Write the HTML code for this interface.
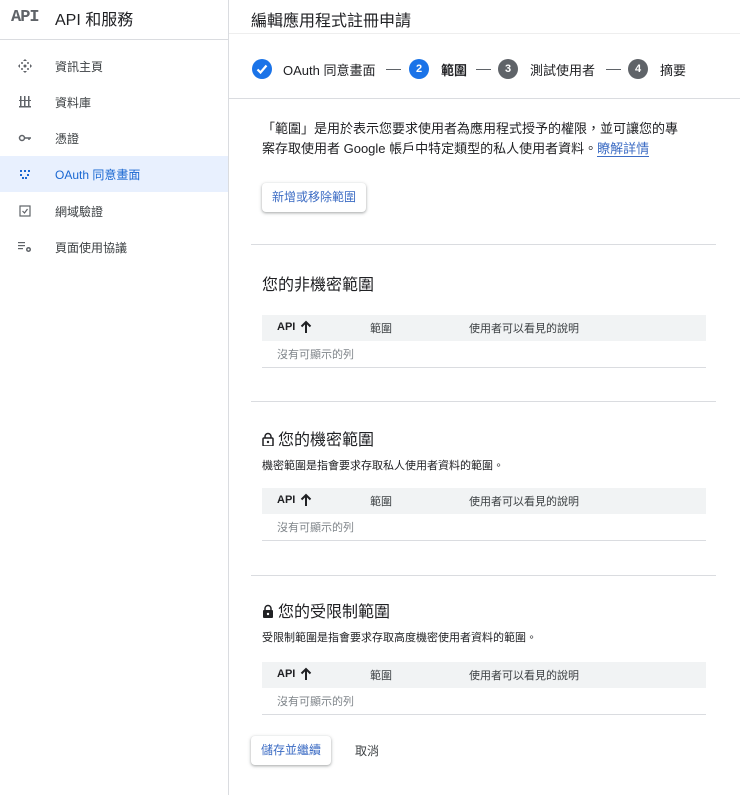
<!DOCTYPE html>
<html><head><meta charset="utf-8"><style>
*{margin:0;padding:0;box-sizing:border-box}
body{width:740px;height:795px;background:#fff;font-family:"Liberation Sans","Noto Sans CJK TC",sans-serif;color:#202124;position:relative;overflow:hidden}
.a{position:absolute;white-space:nowrap}
.side{position:absolute;left:0;top:0;width:229px;height:795px;border-right:1px solid #dadce0}
.hl{position:absolute;height:1px;background:#dadce0}
.nav{position:absolute;left:0;width:228px;height:36px;font-size:12px;color:#3c4043}
.nav span{position:absolute;left:55px;top:10px}
.nav svg{position:absolute;left:18px;top:11px}
.circ{position:absolute;width:20px;height:20px;border-radius:50%;color:#fff;font-size:11px;font-weight:bold;text-align:center;line-height:20px}
.st{font-size:13px;color:#202124}
.dash{position:absolute;height:1px;width:15px;background:#5f6368}
.btn{position:absolute;background:#fff;border-radius:4px;box-shadow:0 1px 2px rgba(60,64,67,.3),0 1px 3px 1px rgba(60,64,67,.15);color:#3c6cc4;font-size:12px;text-align:center}
.th{position:absolute;left:262px;width:444px;height:26px;background:#f1f3f4;font-size:11px}
.th b{position:absolute;left:15px;top:6px;font-size:11px}
.th svg{position:absolute;left:38px;top:5px}
.th .c2{position:absolute;left:108px;top:5px;color:#3c4043}
.th .c3{position:absolute;left:207px;top:5px;color:#3c4043}
.row{position:absolute;left:262px;width:444px;height:27px;border-bottom:1px solid #dadce0;font-size:11px;color:#80868b}
.row span{position:absolute;left:15px;top:5px}
h2{position:absolute;font-weight:normal;font-size:16px;color:#202124;left:262px}
h2 svg{vertical-align:-1px;margin-right:4px}
.desc{position:absolute;left:262px;font-size:11px;color:#202124}
</style></head><body>
<div class="side">
 <div class="a" style="left:11px;top:8px;font-family:'Liberation Mono',monospace;font-weight:bold;font-size:17px;color:#5f6368;letter-spacing:-1px">API</div>
 <div class="a" style="left:55px;top:6px;font-size:16px">API 和服務</div>
 <div class="hl" style="left:0;top:39px;width:228px"></div>
 <div class="nav" style="top:48px"><svg width="14" height="14" viewBox="0 0 14 14" fill="#5f6368"><path d="M7 0l2 2H5zM7 14l2-2H5zM0 7l2-2v4zM14 7l-2-2v4z"/><circle cx="7" cy="7" r="1.5"/><circle cx="4" cy="4" r="1"/><circle cx="10" cy="4" r="1"/><circle cx="4" cy="10" r="1"/><circle cx="10" cy="10" r="1"/></svg><span>資訊主頁</span></div>
 <div class="nav" style="top:84px"><svg width="14" height="14" viewBox="0 0 14 14" fill="#5f6368"><rect x="2" y="1" width="1.5" height="10"/><rect x="6" y="1" width="1.5" height="10"/><rect x="10" y="1" width="1.5" height="10"/><rect x="1" y="11" width="12" height="1.5"/><rect x="1" y="5" width="12" height="1"/></svg><span>資料庫</span></div>
 <div class="nav" style="top:120px"><svg width="14" height="14" viewBox="0 0 14 14" fill="none" stroke="#5f6368" stroke-width="1.5"><circle cx="4" cy="7" r="2.5"/><path d="M6.5 7H13M11 7v2"/></svg><span>憑證</span></div>
 <div class="nav" style="top:156px;background:#e8f0fe"><svg width="14" height="14" viewBox="0 0 14 14" fill="#1967d2"><rect x="2" y="3" width="2" height="2"/><rect x="6" y="3" width="2" height="2"/><rect x="10" y="3" width="2" height="2"/><rect x="2" y="7" width="2" height="2"/><rect x="9" y="7" width="2" height="2"/><rect x="4" y="10" width="2" height="2"/><rect x="7" y="10" width="2" height="2"/></svg><span style="color:#1967d2">OAuth 同意畫面</span></div>
 <div class="nav" style="top:193px"><svg width="14" height="14" viewBox="0 0 14 14" fill="none" stroke="#5f6368" stroke-width="1.2"><rect x="2" y="2" width="10" height="10"/><path d="M4.5 7l2 2 3-4"/></svg><span>網域驗證</span></div>
 <div class="nav" style="top:229px"><svg width="14" height="14" viewBox="0 0 14 14" fill="#5f6368"><rect x="0" y="2" width="7" height="1.2"/><rect x="0" y="5" width="7" height="1.2"/><rect x="0" y="8" width="5" height="1.2"/><circle cx="10.5" cy="9.5" r="2.5"/><circle cx="10.5" cy="9.5" r="1" fill="#fff"/></svg><span>頁面使用協議</span></div>
</div>
<div class="a" style="left:251px;top:7px;font-size:16px">編輯應用程式註冊申請</div>
<div class="hl" style="left:229px;top:33px;width:511px;background:#eee"></div>
<div class="circ" style="left:252px;top:59px;background:#1a73e8"><svg width="20" height="20" viewBox="0 0 20 20"><path d="M5.5 10.5l3 3 6-7" fill="none" stroke="#fff" stroke-width="2.2"/></svg></div>
<div class="a st" style="left:283px;top:60px">OAuth 同意畫面</div>
<div class="dash" style="left:386px;top:69px"></div>
<div class="circ" style="left:409px;top:59px;background:#1a73e8">2</div>
<div class="a st" style="left:441px;top:60px;font-weight:bold">範圍</div>
<div class="dash" style="left:476px;top:69px"></div>
<div class="circ" style="left:498px;top:59px;background:#5f6368">3</div>
<div class="a st" style="left:530px;top:60px">測試使用者</div>
<div class="dash" style="left:606px;top:69px"></div>
<div class="circ" style="left:628px;top:59px;background:#5f6368">4</div>
<div class="a st" style="left:660px;top:60px">摘要</div>
<div class="hl" style="left:229px;top:98px;width:511px"></div>
<div class="a" style="left:262px;top:119px;font-size:13px;line-height:20px">「範圍」是用於表示您要求使用者為應用程式授予的權限，並可讓您的專<br>案存取使用者 Google 帳戶中特定類型的私人使用者資料。<span style="color:#3c6cc4;border-bottom:1px solid #3c6cc4">瞭解詳情</span></div>
<div class="btn" style="left:262px;top:183px;width:104px;height:29px;line-height:28px">新增或移除範圍</div>
<div class="hl" style="left:251px;top:244px;width:465px"></div>
<h2 style="top:271px">您的非機密範圍</h2>
<div class="th" style="top:315px"><b>API</b><svg width="12" height="14" viewBox="0 0 12 14"><path d="M6 13V2M1.5 6.5L6 2l4.5 4.5" fill="none" stroke="#202124" stroke-width="2"/></svg><span class="c2">範圍</span><span class="c3">使用者可以看見的說明</span></div>
<div class="row" style="top:341px"><span>沒有可顯示的列</span></div>
<div class="hl" style="left:251px;top:401px;width:465px"></div>
<h2 style="top:426px"><svg width="12" height="14" viewBox="0 0 12 14"><path d="M3 6V4.5a3 3 0 016 0V6" fill="none" stroke="#202124" stroke-width="1.5"/><rect x="1" y="6" width="10" height="8" rx="1" fill="none" stroke="#202124" stroke-width="1.5"/><circle cx="6" cy="10" r="1.2" fill="#202124"/></svg>您的機密範圍</h2>
<div class="desc" style="top:457px">機密範圍是指會要求存取私人使用者資料的範圍。</div>
<div class="th" style="top:488px"><b>API</b><svg width="12" height="14" viewBox="0 0 12 14"><path d="M6 13V2M1.5 6.5L6 2l4.5 4.5" fill="none" stroke="#202124" stroke-width="2"/></svg><span class="c2">範圍</span><span class="c3">使用者可以看見的說明</span></div>
<div class="row" style="top:514px"><span>沒有可顯示的列</span></div>
<div class="hl" style="left:251px;top:575px;width:465px"></div>
<h2 style="top:598px"><svg width="12" height="14" viewBox="0 0 12 14"><path d="M3 6V4.5a3 3 0 016 0V6" fill="none" stroke="#202124" stroke-width="1.5"/><rect x="1" y="6" width="10" height="8" rx="1" fill="#202124"/><circle cx="6" cy="10" r="1.2" fill="#fff"/></svg>您的受限制範圍</h2>
<div class="desc" style="top:629px">受限制範圍是指會要求存取高度機密使用者資料的範圍。</div>
<div class="th" style="top:662px"><b>API</b><svg width="12" height="14" viewBox="0 0 12 14"><path d="M6 13V2M1.5 6.5L6 2l4.5 4.5" fill="none" stroke="#202124" stroke-width="2"/></svg><span class="c2">範圍</span><span class="c3">使用者可以看見的說明</span></div>
<div class="row" style="top:688px"><span>沒有可顯示的列</span></div>
<div class="btn" style="left:251px;top:736px;width:80px;height:29px;line-height:28px">儲存並繼續</div>
<div class="a" style="left:355px;top:742px;font-size:12px;color:#3c4043">取消</div>
</body></html>
